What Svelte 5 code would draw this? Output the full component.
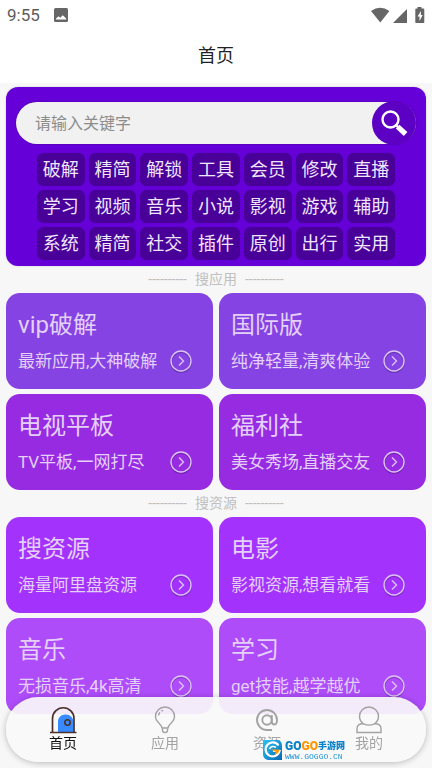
<script>
	const tags = [
		['破解', '精简', '解锁', '工具', '会员', '修改', '直播'],
		['学习', '视频', '音乐', '小说', '影视', '游戏', '辅助'],
		['系统', '精简', '社交', '插件', '原创', '出行', '实用']
	];

	const sections = [
		{
			name: '搜应用',
			cards: [
				{ title: 'vip破解', text: '最新应用,大神破解', tone: 'soft' },
				{ title: '国际版', text: '纯净轻量,清爽体验', tone: 'soft' },
				{ title: '电视平板', text: 'TV平板,一网打尽', tone: 'deep' },
				{ title: '福利社', text: '美女秀场,直播交友', tone: 'deep' }
			]
		},
		{
			name: '搜资源',
			cards: [
				{ title: '搜资源', text: '海量阿里盘资源', tone: 'bright' },
				{ title: '电影', text: '影视资源,想看就看', tone: 'bright' },
				{ title: '音乐', text: '无损音乐,4k高清', tone: 'light' },
				{ title: '学习', text: 'get技能,越学越优', tone: 'light' }
			]
		}
	];

	const tabs = [
		{ id: 'home', label: '首页' },
		{ id: 'apps', label: '应用' },
		{ id: 'res', label: '资源' },
		{ id: 'me', label: '我的' }
	];

	let active = $state('home');
	let keyword = $state('');
</script>

<div class="page">
	<header>
		<div class="status">
			<span class="time">9:55</span>
			<svg class="photo" width="14" height="14" viewBox="0 0 14 14">
				<rect width="14" height="14" rx="1.5" fill="#666" />
				<path d="M2 11.5V10.5L4.6 8.2 6.2 9.8 8.8 7.2 12.2 10.5V11.5Z" fill="#fff" />
			</svg>
			<svg class="signals" width="54" height="18" viewBox="0 0 54 18">
				<g fill="#666">
					<path d="M0 5Q9.2-1.4 18.4 5L9.3 16.4Z" />
					<path d="M22 17 36 3V17Z" />
					<path d="M46.500 1h4v1.600h2q.8 0 .8.8V16.200q0 .8-.8.8h-7.400q-.8 0-.8-.8V3.400q0-.8.8-.8h1.400Z" />
				</g>
				<path d="M50 5 46.500 10.500h2V15l3.200-6h-1.900Z" fill="#fff" />
			</svg>
		</div>
		<h1>首页</h1>
	</header>

	<main>
		<section class="panel">
			<form class="search" onsubmit={(e) => e.preventDefault()}>
				<input type="text" aria-label="搜索" placeholder="请输入关键字" bind:value={keyword} />
				<button type="submit" aria-label="搜索">
					<svg width="28" height="28" viewBox="0 0 28 28" fill="none" stroke="#fff">
						<circle cx="10.5" cy="10.5" r="8" stroke-width="2.4" />
						<path d="M15.5 15.5l3 3" stroke-width="2.2" />
						<path d="M17.6 17.6l8 7.4" stroke-width="5.2" />
					</svg>
				</button>
			</form>
			<div class="tags">
				{#each tags as row}
					<div class="row">
						{#each row as tag}
							<button type="button">{tag}</button>
						{/each}
					</div>
				{/each}
			</div>
		</section>

		{#each sections as section}
			<h2><span>----------</span>{section.name}<span>----------</span></h2>
			<div class="cards">
				{#each section.cards as card}
					<a class="card {card.tone}" href="#{card.title}">
						<strong>{card.title}</strong>
						<span class="line">
							<span class="text">{card.text}</span>
							<svg width="26" height="26" viewBox="0 0 26 26" fill="none">
								<circle cx="13" cy="14" r="10" stroke="#000" stroke-opacity=".2" stroke-width="2" />
								<circle cx="13" cy="13" r="10" stroke="#dcc2f6" stroke-width="1.4" />
								<path d="M11 8.5 15.5 13 11 17.5" stroke="#dcc2f6" stroke-width="1.4" />
							</svg>
						</span>
					</a>
				{/each}
			</div>
		{/each}
	</main>

	<nav>
		{#each tabs as tab}
			<button type="button" class:active={active === tab.id} onclick={() => (active = tab.id)}>
				<svg width="28" height="28" viewBox="0 0 28 28" fill="none" stroke="#a3a3a3" stroke-width="1.4">
					{#if tab.id === 'home'}
						<path d="M9 26V15.5a7 7 0 0 1 7-7h1a7.5 7.5 0 0 1 7.5 7.5V26Z" fill="#388bff" stroke="none" />
						<path d="M3.5 26V12.5a10.7 10.7 0 0 1 21.5 0V26" stroke="#4c302c" stroke-width="1.7" />
						<path d="M1 26.5H27.5" stroke="#4c302c" stroke-width="1.5" />
						<circle cx="18.5" cy="16.5" r="2.7" stroke="#4c302c" stroke-width="1.6" />
					{:else if tab.id === 'apps'}
						<path d="M11 22C11 18 4.5 16.5 4.5 10.5a9.5 9.5 0 0 1 19 0C23.5 16.5 17 18 17 22Z" />
						<path d="M11.5 22.5v2q0 2 2.5 2t2.5-2v-2M7.5 9.5Q7.8 7.5 9 6.2M10.5 5 12 4.3" />
					{:else if tab.id === 'res'}
						<circle cx="14" cy="14" r="4.7" stroke-width="1.9" />
						<path d="M18.8 9v6.5q0 3 2.6 3 2.6 0 2.6-4.5a10 10 0 1 0-10 10h5" stroke-width="1.9" />
					{:else}
						<path d="M8.5 18C5 15 4.5 12.5 4.5 10.5a9.5 9.5 0 0 1 19 0c0 2-.5 4.5-4 7.5" />
						<path d="M8.5 17.8Q14 20.5 19.5 17.8 26 17.5 26 22.5V26.5H2V22.5Q2 17.5 8.5 17.8Z" />
					{/if}
				</svg>
				<span>{tab.label}</span>
			</button>
		{/each}
	</nav>

	<div class="mark">
		<svg width="20" height="20" viewBox="0 0 20 20">
			<defs>
				<linearGradient id="tile" x1="0" y1="0" x2="1" y2="1">
					<stop offset="0" stop-color="#2cc4f4" />
					<stop offset="1" stop-color="#0568b4" />
				</linearGradient>
			</defs>
			<path d="M0 0H15Q19 1 19 6V20H5Q0 19 0 14Z" fill="url(#tile)" />
			<path d="M15.5 5.5A7 7 0 1 0 16.5 11H10" fill="none" stroke="#fff" stroke-width="2.2" />
			<path d="M13 7.5A4 4 0 0 0 6.5 9" fill="none" stroke="#fff" stroke-width="1.5" />
			<path d="M8 9.5H16.5Q16 14 11.5 14.5L13 12Z" fill="#ff9d14" />
		</svg>
		<div class="brand">
			<div class="name"><b class="blue">GO</b><b class="orange">GO</b><b class="cn">手游网</b></div>
			<small>WWW.GOGGO.CN</small>
		</div>
	</div>
</div>

<style>
	:global(body) {
		margin: 0;
		background: #f7f7f7;
	}
	.page {
		font-family: Roboto, 'Noto Sans CJK SC', sans-serif;
		padding-bottom: 54px;
	}
	button,
	input {
		font-family: inherit;
		border: 0;
		padding: 0;
		margin: 0;
	}
	button {
		cursor: pointer;
	}
	svg {
		display: block;
		flex: none;
	}

	header {
		background: #fff;
		height: 83px;
	}
	.status {
		display: flex;
		align-items: center;
		height: 30px;
		padding: 0 7px;
	}
	.time {
		font-size: 17px;
		color: #5c5c5c;
	}
	.photo {
		margin-left: 14px;
	}
	.signals {
		margin-left: auto;
	}
	h1 {
		margin: 0;
		font-size: 18px;
		line-height: 52px;
		font-weight: 400;
		text-align: center;
		color: #222;
	}

	main {
		padding: 4px 6px 0;
	}
	.panel {
		background: #6600d9;
		border-radius: 12px;
		padding: 15px 10px 6px;
		box-shadow: 0 0 2px rgba(0, 0, 0, 0.2);
	}
	.search {
		display: flex;
		align-items: center;
		height: 42px;
		border-radius: 21px;
		background: #f1f1f1;
		box-shadow: 0 0 2px rgba(0, 0, 0, 0.4);
	}
	.search input {
		flex: 1;
		min-width: 0;
		height: 42px;
		padding-left: 19px;
		border-radius: 21px;
		background: transparent;
		font-size: 16px;
		outline: none;
	}
	.search input::placeholder {
		color: #8c8c8c;
	}
	.search button {
		display: flex;
		align-items: center;
		justify-content: center;
		width: 44px;
		height: 44px;
		border-radius: 50%;
		background: #5c00c4;
	}
	.tags {
		display: flex;
		flex-direction: column;
		gap: 4px;
		margin: 9px 21px 0;
	}
	.row {
		display: flex;
		gap: 4px;
	}
	.row button {
		flex: 1;
		height: 33px;
		border-radius: 7px;
		background: #480099;
		box-shadow: 0 0 1px rgba(0, 0, 0, 0.3);
		color: #f0e6fa;
		font-size: 18px;
		line-height: 33px;
	}

	h2 {
		display: flex;
		justify-content: center;
		gap: 8px;
		margin: 0;
		font-size: 14px;
		line-height: 27px;
		font-weight: 400;
		color: #c0c0c0;
	}
	.cards {
		display: grid;
		grid-template-columns: 1fr 1fr;
		gap: 5px 6px;
	}
	.card {
		box-sizing: border-box;
		height: 96px;
		padding: 14px 12px 0;
		border-radius: 14px;
		color: #e4d0f8;
		text-decoration: none;
	}
	.card strong {
		display: block;
		font-size: 24px;
		line-height: 36px;
		font-weight: 400;
	}
	.line {
		display: flex;
		align-items: center;
		justify-content: space-between;
		padding-right: 7px;
		margin-top: 5px;
	}
	.text {
		font-size: 17px;
		line-height: 26px;
		white-space: nowrap;
	}
	.soft {
		background: #8443e2;
	}
	.deep {
		background: #962be2;
	}
	.bright {
		background: #a333fc;
	}
	.light {
		background: #ae4cfa;
	}

	nav {
		position: fixed;
		left: 6px;
		right: 6px;
		bottom: 6px;
		display: flex;
		box-sizing: border-box;
		height: 65px;
		padding: 9px 6px 0;
		border-radius: 32px;
		background: rgba(248, 248, 248, 0.92);
		box-shadow: 0 1px 6px rgba(0, 0, 0, 0.25);
	}
	nav button {
		flex: 1;
		display: flex;
		flex-direction: column;
		align-items: center;
		background: none;
		color: #a3a3a3;
		font-size: 14px;
		line-height: 18px;
	}
	nav .active {
		color: #111;
	}

	.mark {
		position: fixed;
		right: 87px;
		bottom: 8px;
		display: flex;
		align-items: center;
		gap: 2px;
		pointer-events: none;
	}
	.name {
		display: flex;
		align-items: center;
		font-size: 12px;
		line-height: 14px;
		white-space: nowrap;
	}
	.name b {
		font-weight: 900;
	}
	.blue,
	.cn {
		color: #0a80c8;
	}
	.orange {
		color: #ff9500;
	}
	.name .cn {
		font-size: 9px;
	}
	small {
		display: block;
		font: 8px/7px 'Liberation Mono', monospace;
		color: #2196d6;
	}
</style>
